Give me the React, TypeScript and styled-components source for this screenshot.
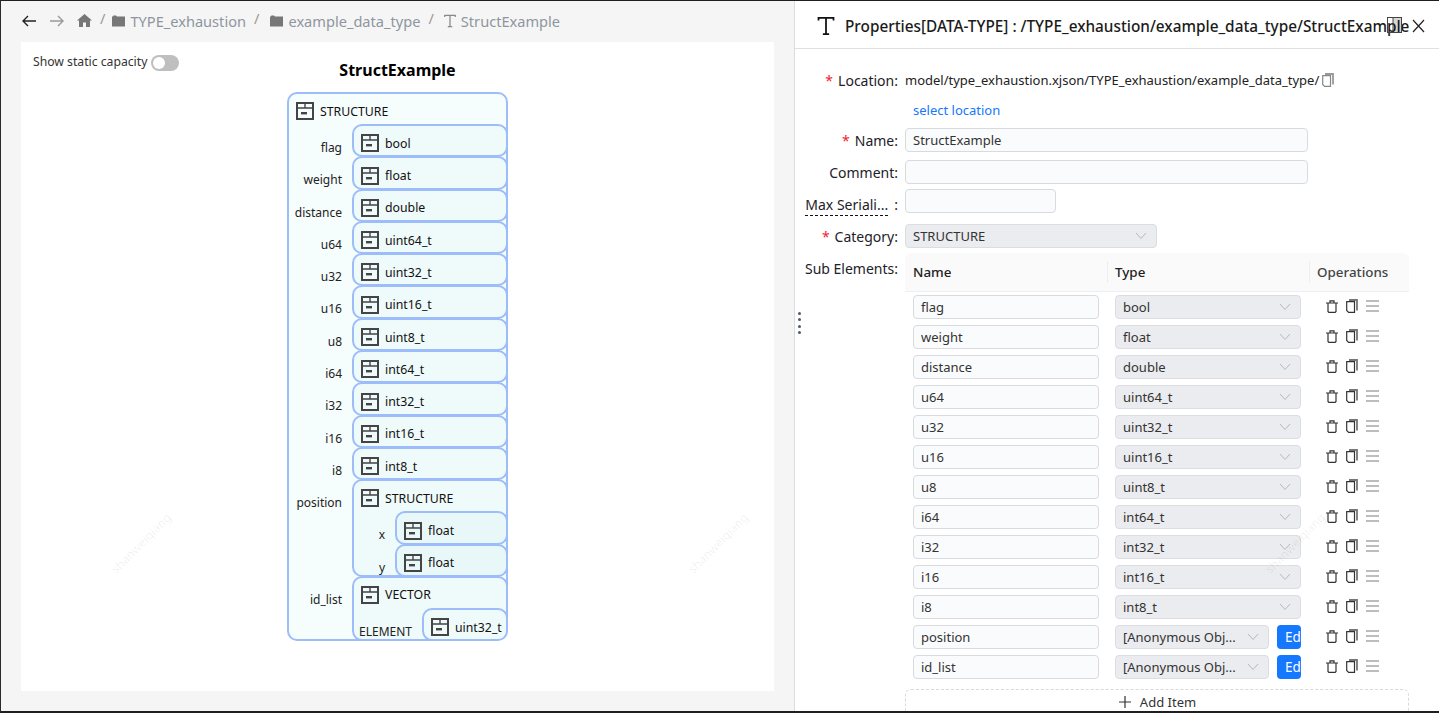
import React from 'react';
import styled, { createGlobalStyle } from 'styled-components';

const GlobalStyle = createGlobalStyle`
  html, body { margin: 0; padding: 0; height: 100%; overflow: hidden; }
  body { font-family: "Noto Sans", "Open Sans", sans-serif; font-size: 13px; color: #1d2129; background: #fff; }
  * { box-sizing: border-box; }
`;

const Frame = styled.div`
  width: 1439px;
  height: 713px;
  display: flex;
  border-top: 1px solid #1f1f1f;
  border-bottom: 2px solid #1f1f1f;
  border-left: 1px solid #2a2a2a;
  overflow: hidden;
  position: relative;
`;
const LeftPane = styled.div`
  width: 793px;
  flex-shrink: 0;
  background: #f5f5f5;
  display: flex;
  flex-direction: column;
  padding: 0 20px 20px;
`;
const Breadcrumbs = styled.div`
  height: 41px;
  padding-bottom: 2px;
  display: flex;
  align-items: center;
  gap: 5px;
  color: #8f959e;
  font-size: 14.6px;
`;
const NavIcon = styled.span`
  display: inline-flex;
  width: 16px;
  margin-right: 7px;
`;
const Crumb = styled.span`
  display: inline-flex;
  align-items: center;
  gap: 5px;
  white-space: nowrap;
`;
const TypeCrumb = styled(Crumb)`
  gap: 4px;
`;
const Sep = styled.span<{ $after: number }>`
  color: #999;
  margin: -6px ${p => p.$after}px 0 3px;
`;
const Canvas = styled.div`
  flex: 1;
  background: #fff;
  position: relative;
  padding: 9px 12px;
  overflow: hidden;
`;
const StaticRow = styled.div`
  display: flex;
  align-items: center;
  gap: 4px;
  font-size: 12.2px;
  color: #333;
  height: 20px;
`;
const Toggle = styled.span`
  width: 28px;
  height: 16px;
  margin-top: 3px;
  border-radius: 8px;
  background: #bfbfbf;
  padding: 2px;
  display: inline-flex;
  &::before {
    content: '';
    width: 12px;
    height: 12px;
    border-radius: 50%;
    background: #fff;
  }
`;
const DiagramWrap = styled.div`
  position: absolute;
  left: 266px;
  top: 14px;
  width: 221px;
`;
const DiagramTitle = styled.div`
  text-align: center;
  font-weight: 700;
  font-size: 16px;
  line-height: 28px;
  color: #000;
  height: 36px;
`;
const Node = styled.div<{ $tint?: string }>`
  border: 2px solid #9cbcfa;
  border-radius: 10px;
  background: ${p => p.$tint ?? '#f6fdfd'};
  overflow: hidden;
`;
const NodeHead = styled.div`
  height: 29.3px;
  padding: 5.3px 0 0 7px;
  display: flex;
  align-items: center;
  gap: 6px;
  font-size: 12.3px;
  color: #111;
  white-space: nowrap;
`;
const GroupHead = styled(NodeHead)`
  height: 31px;
  padding-top: 3px;
`;
const FieldList = styled.div`
  margin: 0 -2px -2px 0;
`;
const FieldRow = styled.div<{ $labelW: number }>`
  display: grid;
  grid-template-columns: ${p => p.$labelW}px 1fr;
  column-gap: 10px;
`;
const FieldLabel = styled.div`
  text-align: right;
  font-size: 12px;
  color: #222;
  padding-top: 14px;
  white-space: nowrap;
`;
const FieldBody = styled.div`
  margin-top: -1px;
`;
const VectorFoot = styled.div`
  display: flex;
  justify-content: space-between;
  align-items: flex-end;
  margin: -1px -2px -2px 0;
  padding-left: 5px;
`;
const ElementLabel = styled.span`
  font-size: 12px;
  color: #222;
  padding-bottom: 1px;
`;
const ElementBox = styled(Node)`
  width: 86px;
`;

const RightPane = styled.div`
  flex: 1;
  border-left: 1px solid #dcdcdc;
  display: flex;
  flex-direction: column;
  position: relative;
  min-width: 0;
`;
const PanelHeader = styled.div`
  height: 48px;
  flex-shrink: 0;
  border-bottom: 1px solid #e0e0e0;
  display: flex;
  align-items: center;
  padding: 2px 0 0 21px;
  position: relative;
  white-space: nowrap;
  overflow: hidden;
  font-size: 15.35px;
  font-weight: 500;
  color: #1b1b1b;
`;
const HeaderTitle = styled.span`
  margin-left: 9px;
`;
const HeaderTools = styled.div`
  position: absolute;
  left: 592px;
  top: 16px;
  display: flex;
  align-items: flex-start;
  gap: 10px;
`;
const DragDots = styled.div`
  position: absolute;
  left: 3px;
  top: 311px;
  display: flex;
  flex-direction: column;
  gap: 3.3px;
  span {
    width: 3px;
    height: 3px;
    border-radius: 50%;
    background: #4d5a6a;
  }
`;
const Form = styled.div`
  padding-top: 19px;
  display: flex;
  flex-direction: column;
`;
const FormRow = styled.div<{ $h: number }>`
  display: flex;
  align-items: flex-start;
  height: ${p => p.$h}px;
`;
const Label = styled.div<{ $drop?: number }>`
  width: 110px;
  flex-shrink: 0;
  text-align: right;
  padding: ${p => p.$drop ?? 0}px 7px 0 0;
  font-size: 14px;
  line-height: 26px;
  color: #1d2129;
  white-space: nowrap;
`;
const Req = styled.span`
  color: #f5222d;
  margin-right: 5px;
`;
const Dashed = styled.span`
  border-bottom: 1px dashed #111;
  padding-bottom: 1px;
  margin-right: 6px;
`;
const LocationText = styled.div`
  font-size: 13px;
  line-height: 22px;
  padding-top: 1px;
  color: #222;
  display: flex;
  align-items: center;
  gap: 3px;
  white-space: nowrap;
`;
const LinkText = styled.a`
  color: #1677ff;
  font-size: 13px;
  line-height: 22px;
  margin-left: 8px;
`;
const Input = styled.div<{ $w: number }>`
  width: ${p => p.$w}px;
  height: 24px;
  border: 1px solid #d9dadd;
  border-radius: 4px;
  background: #fafbfc;
  padding: 0 7px;
  font-size: 13px;
  line-height: 22px;
  color: #333;
  white-space: nowrap;
`;
const SelectBox = styled.div<{ $w: number }>`
  width: ${p => p.$w}px;
  height: 24px;
  border: 1px solid #dcdde0;
  border-radius: 4px;
  background: #ebecef;
  padding: 0 9px 0 7px;
  font-size: 13px;
  line-height: 22px;
  color: #333;
  display: flex;
  justify-content: space-between;
  align-items: center;
  white-space: nowrap;
`;
const TableBox = styled.div`
  width: 504px;
`;
const TableHead = styled.div`
  height: 39px;
  background: #fafafa;
  border-bottom: 1px solid #efefef;
  border-radius: 6px 6px 0 0;
  display: grid;
  grid-template-columns: 202px 202px 100px;
  align-items: center;
  font-size: 13.4px;
  font-weight: 500;
  color: #222;
`;
const HeadCell = styled.div<{ $muted?: boolean; $divider?: boolean }>`
  padding-left: ${p => (p.$divider ? 7 : 8)}px;
  height: 22px;
  line-height: 22px;
  border-left: ${p => (p.$divider ? '1px solid #eee' : 'none')};
  color: ${p => (p.$muted ? '#444' : '#222')};
`;
const TableRow = styled.div`
  height: 30px;
  display: grid;
  grid-template-columns: 202px 202px 100px;
  align-items: center;
`;
const NameCell = styled.div`
  padding-left: 8px;
`;
const TypeCell = styled.div`
  padding-left: 8px;
  display: flex;
  gap: 8px;
`;
const EditBtn = styled.div`
  width: 24px;
  height: 24px;
  background: #1677ff;
  color: #fff;
  border-radius: 4px;
  font-size: 13.5px;
  line-height: 24px;
  padding-left: 8px;
  overflow: hidden;
  white-space: nowrap;
`;
const Ops = styled.div`
  display: flex;
  align-items: center;
  gap: 8px;
  padding: 0 0 2px 17px;
`;
const AddItem = styled.div`
  width: 504px;
  height: 26px;
  margin-top: 7px;
  border: 1px dashed #d9d9d9;
  border-radius: 6px;
  display: flex;
  justify-content: center;
  align-items: center;
  gap: 8px;
  font-size: 13px;
  color: #333;
`;
const Mark = styled.span<{ $x: number; $y: number }>`
  position: absolute;
  left: ${p => p.$x}px;
  top: ${p => p.$y}px;
  transform: translate(-50%, -50%) rotate(-45deg);
  font-size: 12px;
  color: rgba(0, 0, 0, 0.07);
  pointer-events: none;
  white-space: nowrap;
`;

const BlockIcon = () => (
  <svg width="18" height="18" viewBox="0 0 18 18" fill="none" style={{ flexShrink: 0 }}>
    <rect x="1" y="1" width="16" height="16" stroke="#444" strokeWidth="2" />
    <path d="M1 6h16M9 1v5" stroke="#444" strokeWidth="1.4" />
    <rect x="5" y="10" width="6" height="2.4" fill="#444" />
  </svg>
);
const TIcon = ({ size = 14, color = '#888' }: { size?: number; color?: string }) => (
  <svg width={size} height={size} viewBox="0 0 16 16" fill="none">
    <path d="M2 3.5V1.5h12v2M8 1.5v13M5.5 14.5h5" stroke={color} strokeWidth="1.4" />
  </svg>
);
const Folder = () => (
  <svg width="13" height="12" viewBox="0 0 13 12">
    <path d="M0 3V11.5H13V1.5H5L4 0.5H1.5L0 2z" fill="#777" />
  </svg>
);
const Chevron = () => (
  <svg width="12" height="8" viewBox="0 0 12 8" fill="none">
    <path d="M1 1l5 5.5L11 1" stroke="#b5b8bd" strokeWidth="1" />
  </svg>
);
const Trash = () => (
  <svg width="12" height="13" viewBox="0 0 12 13" fill="none">
    <path d="M0 3h12M4 3V.8h4V3M2 3v8.4l.8.9h6.4l.8-.9V3" stroke="#333" strokeWidth="1.2" />
  </svg>
);
const Copy = ({ back = '#777', front = '#333' }: { back?: string; front?: string }) => (
  <svg width="12" height="14" viewBox="0 0 12 14" fill="none">
    <path d="M3 1h8v10.5" stroke={back} strokeWidth="1.8" />
    <path d="M.7 2.6h7.8v10.7H2.6L.7 11.4z" stroke={front} strokeWidth="1.2" fill="#fff" />
  </svg>
);
const Bars = () => (
  <svg width="13" height="12" viewBox="0 0 13 12" fill="none">
    <path d="M0 1h13M0 6h13M0 11h13" stroke="#a8a8a8" strokeWidth="1.4" />
  </svg>
);

type Field = { label: string; type: string };
const fields: Field[] = [
  { label: 'flag', type: 'bool' },
  { label: 'weight', type: 'float' },
  { label: 'distance', type: 'double' },
  { label: 'u64', type: 'uint64_t' },
  { label: 'u32', type: 'uint32_t' },
  { label: 'u16', type: 'uint16_t' },
  { label: 'u8', type: 'uint8_t' },
  { label: 'i64', type: 'int64_t' },
  { label: 'i32', type: 'int32_t' },
  { label: 'i16', type: 'int16_t' },
  { label: 'i8', type: 'int8_t' },
];

const rows = [
  ...fields.map(f => ({ name: f.label, type: f.type, anon: false })),
  { name: 'position', type: '[Anonymous Obj...', anon: true },
  { name: 'id_list', type: '[Anonymous Obj...', anon: true },
];

export default function App() {
  return (
    <>
      <GlobalStyle />
      <Frame>
        <LeftPane>
          <Breadcrumbs>
            <NavIcon>
              <svg width="16" height="14" viewBox="0 0 16 14" fill="none">
                <path d="M15 7H2M7 2L2 7l5 5" stroke="#222" strokeWidth="1.4" />
              </svg>
            </NavIcon>
            <NavIcon>
              <svg width="16" height="14" viewBox="0 0 16 14" fill="none">
                <path d="M1 7h13M9 2l5 5-5 5" stroke="#999" strokeWidth="1.4" />
              </svg>
            </NavIcon>
            <svg width="15" height="13" viewBox="0 0 15 13">
              <path d="M7.5 0L0 6.5h2V13h4V8.5h3V13h4V6.5h2z" fill="#777" />
            </svg>
            <Sep $after={2}>/</Sep>
            <Crumb><Folder />TYPE_exhaustion</Crumb>
            <Sep $after={6}>/</Sep>
            <Crumb><Folder />example_data_type</Crumb>
            <Sep $after={4}>/</Sep>
            <TypeCrumb><TIcon />StructExample</TypeCrumb>
          </Breadcrumbs>
          <Canvas>
            <StaticRow>Show static capacity<Toggle /></StaticRow>
            <DiagramWrap>
              <DiagramTitle>StructExample</DiagramTitle>
              <Node>
                <GroupHead><BlockIcon />STRUCTURE</GroupHead>
                <FieldList>
                  {fields.map(f => (
                    <FieldRow $labelW={53} key={f.label}>
                      <FieldLabel>{f.label}</FieldLabel>
                      <FieldBody>
                        <Node $tint="#effafa">
                          <NodeHead><BlockIcon />{f.type}</NodeHead>
                        </Node>
                      </FieldBody>
                    </FieldRow>
                  ))}
                  <FieldRow $labelW={53}>
                    <FieldLabel>position</FieldLabel>
                    <FieldBody>
                      <Node $tint="#effafa">
                        <GroupHead><BlockIcon />STRUCTURE</GroupHead>
                        <FieldList>
                          <FieldRow $labelW={31}>
                            <FieldLabel>x</FieldLabel>
                            <FieldBody>
                              <Node $tint="#e8f8f8"><NodeHead><BlockIcon />float</NodeHead></Node>
                            </FieldBody>
                          </FieldRow>
                          <FieldRow $labelW={31}>
                            <FieldLabel>y</FieldLabel>
                            <FieldBody>
                              <Node $tint="#e8f8f8"><NodeHead><BlockIcon />float</NodeHead></Node>
                            </FieldBody>
                          </FieldRow>
                        </FieldList>
                      </Node>
                    </FieldBody>
                  </FieldRow>
                  <FieldRow $labelW={53}>
                    <FieldLabel>id_list</FieldLabel>
                    <FieldBody>
                      <Node $tint="#effafa">
                        <GroupHead><BlockIcon />VECTOR</GroupHead>
                        <VectorFoot>
                          <ElementLabel>ELEMENT</ElementLabel>
                          <ElementBox $tint="#effafa"><NodeHead><BlockIcon />uint32_t</NodeHead></ElementBox>
                        </VectorFoot>
                      </Node>
                    </FieldBody>
                  </FieldRow>
                </FieldList>
              </Node>
            </DiagramWrap>
            <Mark $x={120} $y={501}>shanweiqiang</Mark>
            <Mark $x={697} $y={501}>shanweiqiang</Mark>
          </Canvas>
        </LeftPane>
        <RightPane>
          <PanelHeader>
            <TIcon size={20} color="#111" />
            <HeaderTitle>Properties[DATA-TYPE] : /TYPE_exhaustion/example_data_type/StructExample</HeaderTitle>
            <HeaderTools>
              <svg width="15" height="16" viewBox="0 0 15 16" fill="none">
                <rect x="6" y="0.5" width="8.5" height="15" fill="#000" fillOpacity="0.16" />
                <rect x="0.5" y="0.5" width="14" height="15" stroke="#444" />
                <path d="M6 1v14" stroke="#444" />
              </svg>
              <svg width="13" height="14" viewBox="0 0 13 14" fill="none" style={{ marginTop: 2 }}>
                <path d="M1 1l11 12M12 1L1 13" stroke="#222" strokeWidth="1.2" />
              </svg>
            </HeaderTools>
          </PanelHeader>
          <DragDots><span /><span /><span /><span /></DragDots>
          <Mark $x={500} $y={542}>shanweiqiang</Mark>
          <Form>
            <FormRow $h={31}>
              <Label><Req>*</Req>Location:</Label>
              <LocationText>model/type_exhaustion.xjson/TYPE_exhaustion/example_data_type/<Copy back="#999" front="#888" /></LocationText>
            </FormRow>
            <FormRow $h={29}>
              <Label />
              <LinkText>select location</LinkText>
            </FormRow>
            <FormRow $h={32}>
              <Label><Req>*</Req>Name:</Label>
              <Input $w={403}>StructExample</Input>
            </FormRow>
            <FormRow $h={29}>
              <Label>Comment:</Label>
              <Input $w={403} />
            </FormRow>
            <FormRow $h={35}>
              <Label $drop={3}><Dashed>Max Seriali...</Dashed>:</Label>
              <Input $w={151} />
            </FormRow>
            <FormRow $h={29}>
              <Label><Req>*</Req>Category:</Label>
              <SelectBox $w={252}>STRUCTURE<Chevron /></SelectBox>
            </FormRow>
            <FormRow $h={450}>
              <Label $drop={3}>Sub Elements:</Label>
              <div>
                <TableBox>
                  <TableHead>
                    <HeadCell>Name</HeadCell>
                    <HeadCell $divider>Type</HeadCell>
                    <HeadCell $divider $muted>Operations</HeadCell>
                  </TableHead>
                  {rows.map(r => (
                    <TableRow key={r.name}>
                      <NameCell><Input $w={186}>{r.name}</Input></NameCell>
                      <TypeCell>
                        <SelectBox $w={r.anon ? 154 : 186}>{r.type}<Chevron /></SelectBox>
                        {r.anon && <EditBtn>Ed</EditBtn>}
                      </TypeCell>
                      <Ops><Trash /><Copy /><Bars /></Ops>
                    </TableRow>
                  ))}
                </TableBox>
                <AddItem>
                  <svg width="14" height="14" viewBox="0 0 14 14" fill="none">
                    <path d="M7 1v12M1 7h12" stroke="#333" strokeWidth="1.2" />
                  </svg>
                  Add Item
                </AddItem>
              </div>
            </FormRow>
          </Form>
        </RightPane>
      </Frame>
    </>
  );
}
